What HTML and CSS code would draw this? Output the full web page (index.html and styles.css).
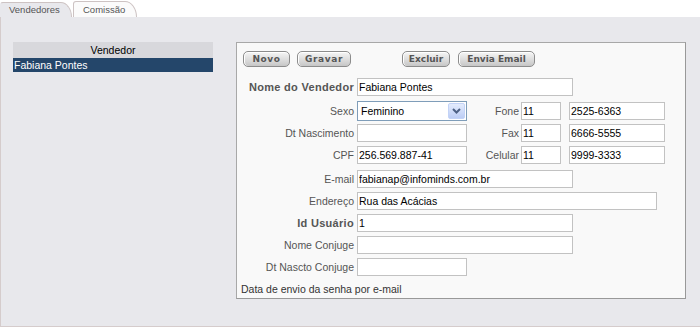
FILE: index.html
```html
<!DOCTYPE html>
<html lang="pt-BR">
  <head>
    <meta charset="UTF-8" />
    <title>Cadastro de Vendedores</title>
    <link rel="stylesheet" href="styles.css">
  </head>
  <body>
    <div class="tabs">
      <div class="tab tab-active">Vendedores</div>
      <div class="tab">Comissão</div>
    </div>
    <div class="page">
      <div class="list">
        <div class="list-head">Vendedor</div>
        <div class="list-row selected">Fabiana Pontes</div>
      </div>
      <div class="panel">
        <div class="toolbar">
          <button class="btn btn-novo">Novo</button>
          <button class="btn btn-gravar">Gravar</button>
          <button class="btn btn-excluir">Excluir</button>
          <button class="btn btn-email">Envia Email</button>
        </div>
        <div class="form">
          <div class="row">
            <label class="lbl strong">Nome do Vendedor</label>
            <input class="fld w-long" value="Fabiana Pontes" />
          </div>
          <div class="row row-sexo">
            <label class="lbl">Sexo</label>
            <div class="select">
              <span>Feminino</span>
              <span class="select-btn">
                <svg width="9" height="6" viewBox="0 0 9 6"><path d="M1 1 L4.5 4.5 L8 1" fill="none" stroke="#4d6185" stroke-width="2"/></svg>
              </span>
            </div>
            <label class="lbl2">Fone</label>
            <input class="fld w-ddd" value="11" />
            <input class="fld w-tel" value="2525-6363" />
          </div>
          <div class="row row-dt">
            <label class="lbl">Dt Nascimento</label>
            <input class="fld w-short" value="" />
            <label class="lbl2">Fax</label>
            <input class="fld w-ddd" value="11" />
            <input class="fld w-tel" value="6666-5555" />
          </div>
          <div class="row">
            <label class="lbl">CPF</label>
            <input class="fld w-short" value="256.569.887-41" />
            <label class="lbl2">Celular</label>
            <input class="fld w-ddd" value="11" />
            <input class="fld w-tel" value="9999-3333" />
          </div>
          <div class="row row-email">
            <label class="lbl">E-mail</label>
            <input class="fld w-long" value="fabianap@infominds.com.br" />
          </div>
          <div class="row">
            <label class="lbl">Endereço</label>
            <input class="fld w-addr" value="Rua das Acácias" />
          </div>
          <div class="row">
            <label class="lbl strong">Id Usuário</label>
            <input class="fld w-long" value="1" />
          </div>
          <div class="row">
            <label class="lbl">Nome Conjuge</label>
            <input class="fld w-long" value="" />
          </div>
          <div class="row">
            <label class="lbl">Dt Nascto Conjuge</label>
            <input class="fld w-short" value="" />
          </div>
        </div>
        <p class="note">Data de envio da senha por e-mail</p>
      </div>
    </div>
  </body>
</html>
```

FILE: styles.css
```css
body {
  margin: 0;
  width: 700px;
  height: 327px;
  overflow: hidden;
  font-family: 'Liberation Sans', Arial, sans-serif;
  font-size: 10.5px;
  background: #ffffff;
  color: #555555;
}

/* abas */
.tabs {
  display: flex;
  align-items: flex-end;
  height: 17px;
  background: #ffffff;
}

.tab {
  box-sizing: border-box;
  height: 16px;
  width: 64px;
  padding-left: 9px;
  line-height: 15px;
  font-size: 9.5px;
  color: #555555;
  background: #fbfbfb;
  border: 1px solid #cdc3c3;
  border-bottom: none;
  border-radius: 3px 12px 0 0 / 3px 16px 0 0;
  margin-left: 1px;
}

.tab-active {
  width: 72px;
  height: 15px;
  padding-left: 8px;
  line-height: 14px;
  margin-left: 0;
  background: #e8e8ec;
  border-left-color: #e8e8ec;
}

/* area principal */
.page {
  box-sizing: border-box;
  display: flex;
  align-items: flex-start;
  height: 310px;
  padding: 25px 0 0 12px;
  background: #e8e8ec;
  border-left: 1px solid #d5cccc;
  border-bottom: 1px solid #d5cccc;
}

.list {
  width: 200px;
}

.list-head {
  height: 16px;
  line-height: 16px;
  text-align: center;
  background: #d8d8dc;
  color: #000000;
}

.list-row {
  height: 14px;
  line-height: 14px;
  padding-left: 1px;
}

.list-row.selected {
  background: #24466a;
  color: #ffffff;
}

.panel {
  box-sizing: border-box;
  width: 450px;
  height: 257px;
  margin-left: 23px;
  background: #f9f9f9;
  border: 1px solid #a8a8a8;
  border-right-color: #999999;
  border-bottom-color: #999999;
}

.toolbar {
  display: flex;
  padding: 8px 0 0 6px;
}

.btn {
  box-sizing: border-box;
  height: 16px;
  padding: 0;
  font-family: 'DejaVu Sans', Verdana, sans-serif;
  font-size: 9px;
  font-weight: bold;
  color: #555555;
  background: linear-gradient(#f6f6f6, #dcdcdc 55%, #c6c6c6);
  border: 1px solid #8c8c8c;
  border-radius: 5px;
  box-shadow: inset 0 1px 0 #ffffff, inset 1px 0 0 #ffffff;
}

.btn-novo {
  width: 47px;
  letter-spacing: 0.6px;
}

.btn-gravar {
  width: 54px;
  margin-left: 7px;
  letter-spacing: 0.6px;
}

.btn-excluir {
  width: 48px;
  margin-left: 51px;
}

.btn-email {
  width: 77px;
  margin-left: 8px;
}

/* formulario */
.form {
  margin-top: 11px;
}

.row {
  display: flex;
  align-items: center;
  height: 18px;
  margin-top: 4px;
}

.row:first-child {
  margin-top: 0;
}

.row-sexo {
  height: 20px;
  margin-top: 5px;
}

.row-dt {
  margin-top: 3px;
}

.row-email {
  margin-top: 6px;
}

.lbl {
  box-sizing: border-box;
  width: 120px;
  padding-right: 3px;
  text-align: right;
  white-space: nowrap;
}

.lbl.strong {
  font-weight: bold;
  font-size: 11px;
  letter-spacing: 0.3px;
}

.lbl2 {
  box-sizing: border-box;
  width: 54px;
  padding-right: 2px;
  text-align: right;
}

.fld {
  box-sizing: border-box;
  height: 18px;
  margin: 0;
  padding: 0 1px;
  font-family: 'Liberation Sans', Arial, sans-serif;
  font-size: 10.5px;
  color: #000000;
  background: #ffffff;
  border: 1px solid #c2c2c2;
  outline: none;
}

.w-long {
  width: 216px;
}

.w-short {
  width: 110px;
}

.w-addr {
  width: 300px;
}

.w-ddd {
  width: 40px;
}

.w-tel {
  width: 96px;
  margin-left: 8px;
}

.select {
  box-sizing: border-box;
  display: flex;
  align-items: center;
  justify-content: space-between;
  width: 110px;
  height: 20px;
  padding: 0 1px 0 3px;
  color: #000000;
  background: #ffffff;
  border: 1px solid #7f9db9;
}

.select-btn {
  box-sizing: border-box;
  display: flex;
  align-items: center;
  justify-content: center;
  width: 17px;
  height: 16px;
  background: linear-gradient(#e4ecfd, #bccdf5);
  border: 1px solid #c3d3f7;
  border-radius: 2px;
}

.note {
  margin: 6px 0 0 4px;
  line-height: 14px;
  color: #333333;
}
```
